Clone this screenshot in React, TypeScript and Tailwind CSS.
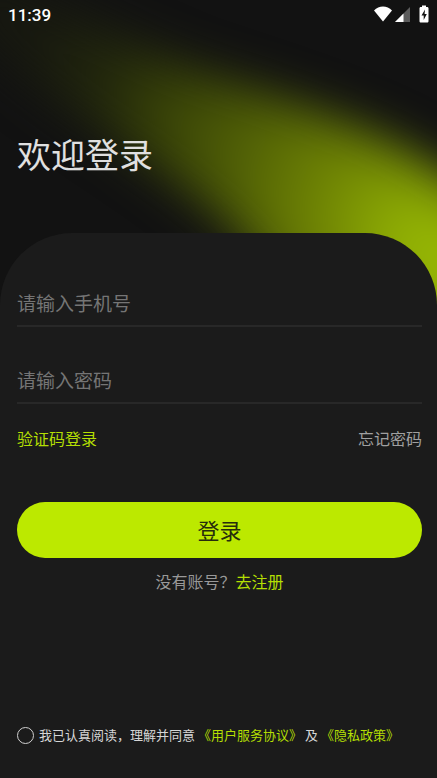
import { useState } from 'react';

interface FieldProps {
  label: string;
  type: string;
  value: string;
  onChange: (value: string) => void;
}

const StatusBar = () => {
  return (
    <div className="flex items-center justify-between h-[30px] pl-2 pr-2">
      <span className="font-[Roboto,sans-serif] text-[17px] leading-5 font-medium text-white">11:39</span>
      <div className="flex items-center pb-[2px]">
        {/* Wifi */}
        <svg className="w-[18px] h-4" viewBox="0 0 18 16">
          <path d="M9 15.5 0 4.4C2.5 1.9 5.7 0.6 9 0.6s6.5 1.3 9 3.8L9 15.5z" fill="#fff" />
        </svg>
        {/* Signal */}
        <svg className="w-[15px] h-4 ml-[3px]" viewBox="0 0 15 16">
          <path d="M15 1v15H0L15 1z" fill="#5c5c5c" />
          <path d="M8.5 7.5V16H0l8.5-8.5z" fill="#fff" />
        </svg>
        {/* Battery */}
        <svg className="w-[10px] h-[18px] ml-[9px]" viewBox="0 0 10 18">
          <path d="M3 0.5h4v1.5h1.2c.7 0 1.3.6 1.3 1.3v12.9c0 .7-.6 1.3-1.3 1.3H1.8c-.7 0-1.3-.6-1.3-1.3V3.3C.5 2.6 1.1 2 1.8 2H3V.5z" fill="#fff" />
          <path d="M6 4.5 2.5 10.500h2.200v4.500L7.800 9H5.600L6 4.500z" fill="#121212" />
        </svg>
      </div>
    </div>
  );
};

const Glow = () => {
  return (
    <svg className="absolute top-0 left-0 w-full" viewBox="0 0 437 340" aria-hidden="true">
      <defs>
        <radialGradient
          id="glow"
          gradientUnits="userSpaceOnUse"
          cx="0"
          cy="0"
          r="1"
          gradientTransform="translate(445 262) rotate(36) scale(480 300)"
        >
          <stop offset="0" stopColor="#9bbd04" />
          <stop offset="0.12" stopColor="#90af04" />
          <stop offset="0.3" stopColor="#6f8404" />
          <stop offset="0.5" stopColor="#4f5e06" />
          <stop offset="0.68" stopColor="#374108" />
          <stop offset="0.82" stopColor="#22270d" />
          <stop offset="1" stopColor="#171810" />
        </radialGradient>
        <filter
          id="soft"
          filterUnits="userSpaceOnUse"
          x="-150"
          y="-150"
          width="900"
          height="750"
          colorInterpolationFilters="sRGB"
        >
          <feGaussianBlur stdDeviation="23" />
        </filter>
      </defs>
      <path
        d="M-80 -60C20 -20 100 32 190 68C280 98 370 124 437 168L650 300V500H400C350 360 285 290 232 228C165 165 70 120 -20 40z"
        fill="url(#glow)"
        filter="url(#soft)"
      />
    </svg>
  );
};

const Field = ({ label, type, value, onChange }: FieldProps) => {
  return (
    <div className="flex h-[77px] items-end border-b-2 border-[#282828]">
      <input
        type={type}
        value={value}
        aria-label={label}
        placeholder={label}
        onChange={(e) => onChange(e.target.value)}
        className="w-full h-[46px] bg-transparent text-[19px] text-gray-200 placeholder:text-[#757575] outline-none"
      />
    </div>
  );
};

const App = () => {
  const [phone, setPhone] = useState('');
  const [password, setPassword] = useState('');
  const [agreed, setAgreed] = useState(false);

  return (
    <div className="relative flex flex-col min-h-screen overflow-hidden bg-[#121212] font-[Noto_Sans_CJK_SC,sans-serif]">
      <Glow />

      {/* Header */}
      <header className="relative h-[233px]">
        <StatusBar />
        <h1 className="pt-[100px] pl-[17px] text-[34px] leading-12 text-[#e0e0e0]">欢迎登录</h1>
      </header>

      {/* Login form */}
      <form
        onSubmit={(e) => e.preventDefault()}
        className="relative flex flex-col flex-1 pt-[17px] pl-[17px] pr-[15px] pb-[33px] rounded-t-[72px] bg-[#1b1b1b]"
      >
        <Field label="请输入手机号" type="tel" value={phone} onChange={setPhone} />
        <Field label="请输入密码" type="password" value={password} onChange={setPassword} />

        <div className="flex justify-between mt-[22px] text-base leading-6">
          <a href="#code" className="text-[#b4df03]">验证码登录</a>
          <a href="#forgot" className="text-[#a0a0a0]">忘记密码</a>
        </div>

        <button type="submit" className="h-14 mt-13 pb-[2px] rounded-full bg-[#bce900] text-[22px] text-[#262c0c]">
          登录
        </button>

        <p className="mt-[11px] text-center text-base leading-6 text-[#999999]">
          没有账号？<a href="#register" className="text-[#b4df03]">去注册</a>
        </p>

        <div className="flex items-center mt-auto gap-[5px] text-[13px] leading-5 text-[#d6d6d6]">
          <input
            id="agree"
            type="checkbox"
            checked={agreed}
            onChange={(e) => setAgreed(e.target.checked)}
            className="appearance-none shrink-0 w-[17px] h-[17px] border border-[#d0d0d0] rounded-full checked:bg-[#bce900]"
          />
          <div className="flex flex-wrap gap-x-[3px]">
            <label htmlFor="agree">我已认真阅读，理解并同意</label>
            <a href="#terms" className="text-[#b4df03]">《用户服务协议》</a>
            <span>及</span>
            <a href="#privacy" className="text-[#b4df03]">《隐私政策》</a>
          </div>
        </div>
      </form>
    </div>
  );
};

export default App;
